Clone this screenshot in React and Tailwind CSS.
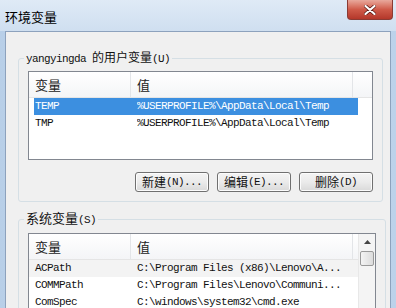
import React from "react";

const mono = "font-['Liberation_Mono','Noto_Sans_CJK_SC',monospace] text-[11px] tracking-[-0.6px]";
const cjk = "font-['Noto_Sans_CJK_SC','Liberation_Sans',sans-serif]";

function Header() {
  return (
    <div className="flex h-[26px] bg-gradient-to-b from-white to-[#f4f5f7] border-b border-[#e5e5e5] shrink-0">
      <div className={`w-[102px] pl-[6px] flex items-center border-r border-[#e3e5e8] text-[13px] text-[#222] ${cjk}`}>变量</div>
      <div className={`w-[222px] pl-[6px] flex items-center border-r border-[#e3e5e8] text-[13px] text-[#222] ${cjk}`}>值</div>
      <div className="flex-1" />
    </div>
  );
}

function Row({ name, value, selected, shaded }) {
  return (
    <div className={`flex h-[17px] items-center ${mono} ${selected ? "text-white" : "text-[#111]"} ${shaded ? "bg-[#f3f3f3]" : ""}`}>
      <div className={`flex h-full items-center w-[324px] ml-[5px] ${selected ? "bg-[#3c8fe0]" : ""}`}>
        <div className="w-[103px] pl-[1px] whitespace-nowrap overflow-hidden">{name}</div>
        <div className="flex-1 whitespace-nowrap overflow-hidden">{value}</div>
      </div>
    </div>
  );
}

function Btn({ label, k, dots }) {
  return (
    <div className="w-[74px] h-[20px] rounded-[3px] border border-[#707070] bg-gradient-to-b from-[#f4f4f4] via-[#ebebeb] to-[#d9d9d9] flex items-center justify-center shadow-[inset_0_0_0_1px_#fcfcfc] text-[#111]">
      <span className={`${cjk} text-[12px]`}>{label}</span>
      <span className={`${mono}`}>({k}){dots ? "..." : ""}</span>
    </div>
  );
}

export default function App() {
  return (
    <div className="w-[396px] h-[308px] overflow-hidden flex flex-col bg-gradient-to-r from-[#b8cfe8] via-[#d3e2f2] to-[#bcd2ea]">
      <div className="h-[31px] flex shrink-0 bg-gradient-to-b from-[#dfeaf6] to-[#cfdff0]">
        <div className={`pl-[5px] pt-[7px] text-[13px] text-black ${cjk} flex-1`}>环境变量</div>
        <div className="mr-[3px] w-[46px] h-[20px] rounded-b-[4px] border border-t-0 border-[#8a3b34] bg-gradient-to-b from-[#e8a89c] via-[#cf5a49] to-[#b4372a] flex items-center justify-center">
          <svg width="12" height="10" viewBox="0 0 12 10">
            <path d="M1.5 1 L10.5 9 M10.5 1 L1.5 9" stroke="#5a1a14" strokeWidth="3.6" strokeLinecap="round" />
            <path d="M1.5 1 L10.5 9 M10.5 1 L1.5 9" stroke="#ffffff" strokeWidth="2.2" strokeLinecap="round" />
          </svg>
        </div>
      </div>
      <div className="mx-[5px] flex-1 border border-[#8da2bd] bg-[#f0f0f0] pt-[17px] pl-[12px] pr-[9px]">
        <fieldset className="border border-[#d5dfe5] rounded-[3px] px-[9px] pb-[9px] pt-0 w-[365px]">
          <legend className={`ml-[-4px] px-[2px] text-[12px] text-[#111] leading-[16px]`}>
            <span className={mono}>yangyingda </span>
            <span className={`${cjk}`}>的用户变量</span>
            <span className={mono}>(U)</span>
          </legend>
          <div className="mt-[4px] h-[89px] border border-[#828790] bg-white flex flex-col">
            <Header />
            <Row name="TEMP" value="%USERPROFILE%\AppData\Local\Temp" selected />
            <Row name="TMP" value="%USERPROFILE%\AppData\Local\Temp" />
          </div>
          <div className="flex justify-end gap-[8px] mt-[12px]">
            <Btn label="新建" k="N" dots />
            <Btn label="编辑" k="E" dots />
            <Btn label="删除" k="D" />
          </div>
        </fieldset>
        <fieldset className="mt-[8px] border border-[#d5dfe5] rounded-[3px] px-[9px] pb-[9px] pt-0 w-[365px]">
          <legend className={`ml-[-4px] px-[2px] text-[13px] text-[#111] leading-[16px]`}>
            <span className={cjk}>系统变量</span>
            <span className={mono}>(S)</span>
          </legend>
          <div className="mt-[5px] h-[100px] border border-[#828790] bg-white flex">
            <div className="flex-1 flex flex-col">
              <Header />
              <Row name="ACPath" value="C:\Program Files (x86)\Lenovo\A..." shaded />
              <Row name="COMMPath" value="C:\Program Files\Lenovo\Communi..." />
              <Row name="ComSpec" value="C:\windows\system32\cmd.exe" />
            </div>
            <div className="w-[17px] bg-[#f4f4f4] border-l border-[#e8e8e8] flex flex-col items-center pt-[6px]">
              <svg width="7" height="4" viewBox="0 0 7 4"><path d="M0 4 L3.5 0 L7 4 Z" fill="#444" /></svg>
              <div className="mt-[7px] w-[14px] h-[15px] rounded-[2px] border border-[#9a9a9a] bg-gradient-to-r from-[#f4f4f4] to-[#dcdcdc]" />
            </div>
          </div>
        </fieldset>
      </div>
    </div>
  );
}
